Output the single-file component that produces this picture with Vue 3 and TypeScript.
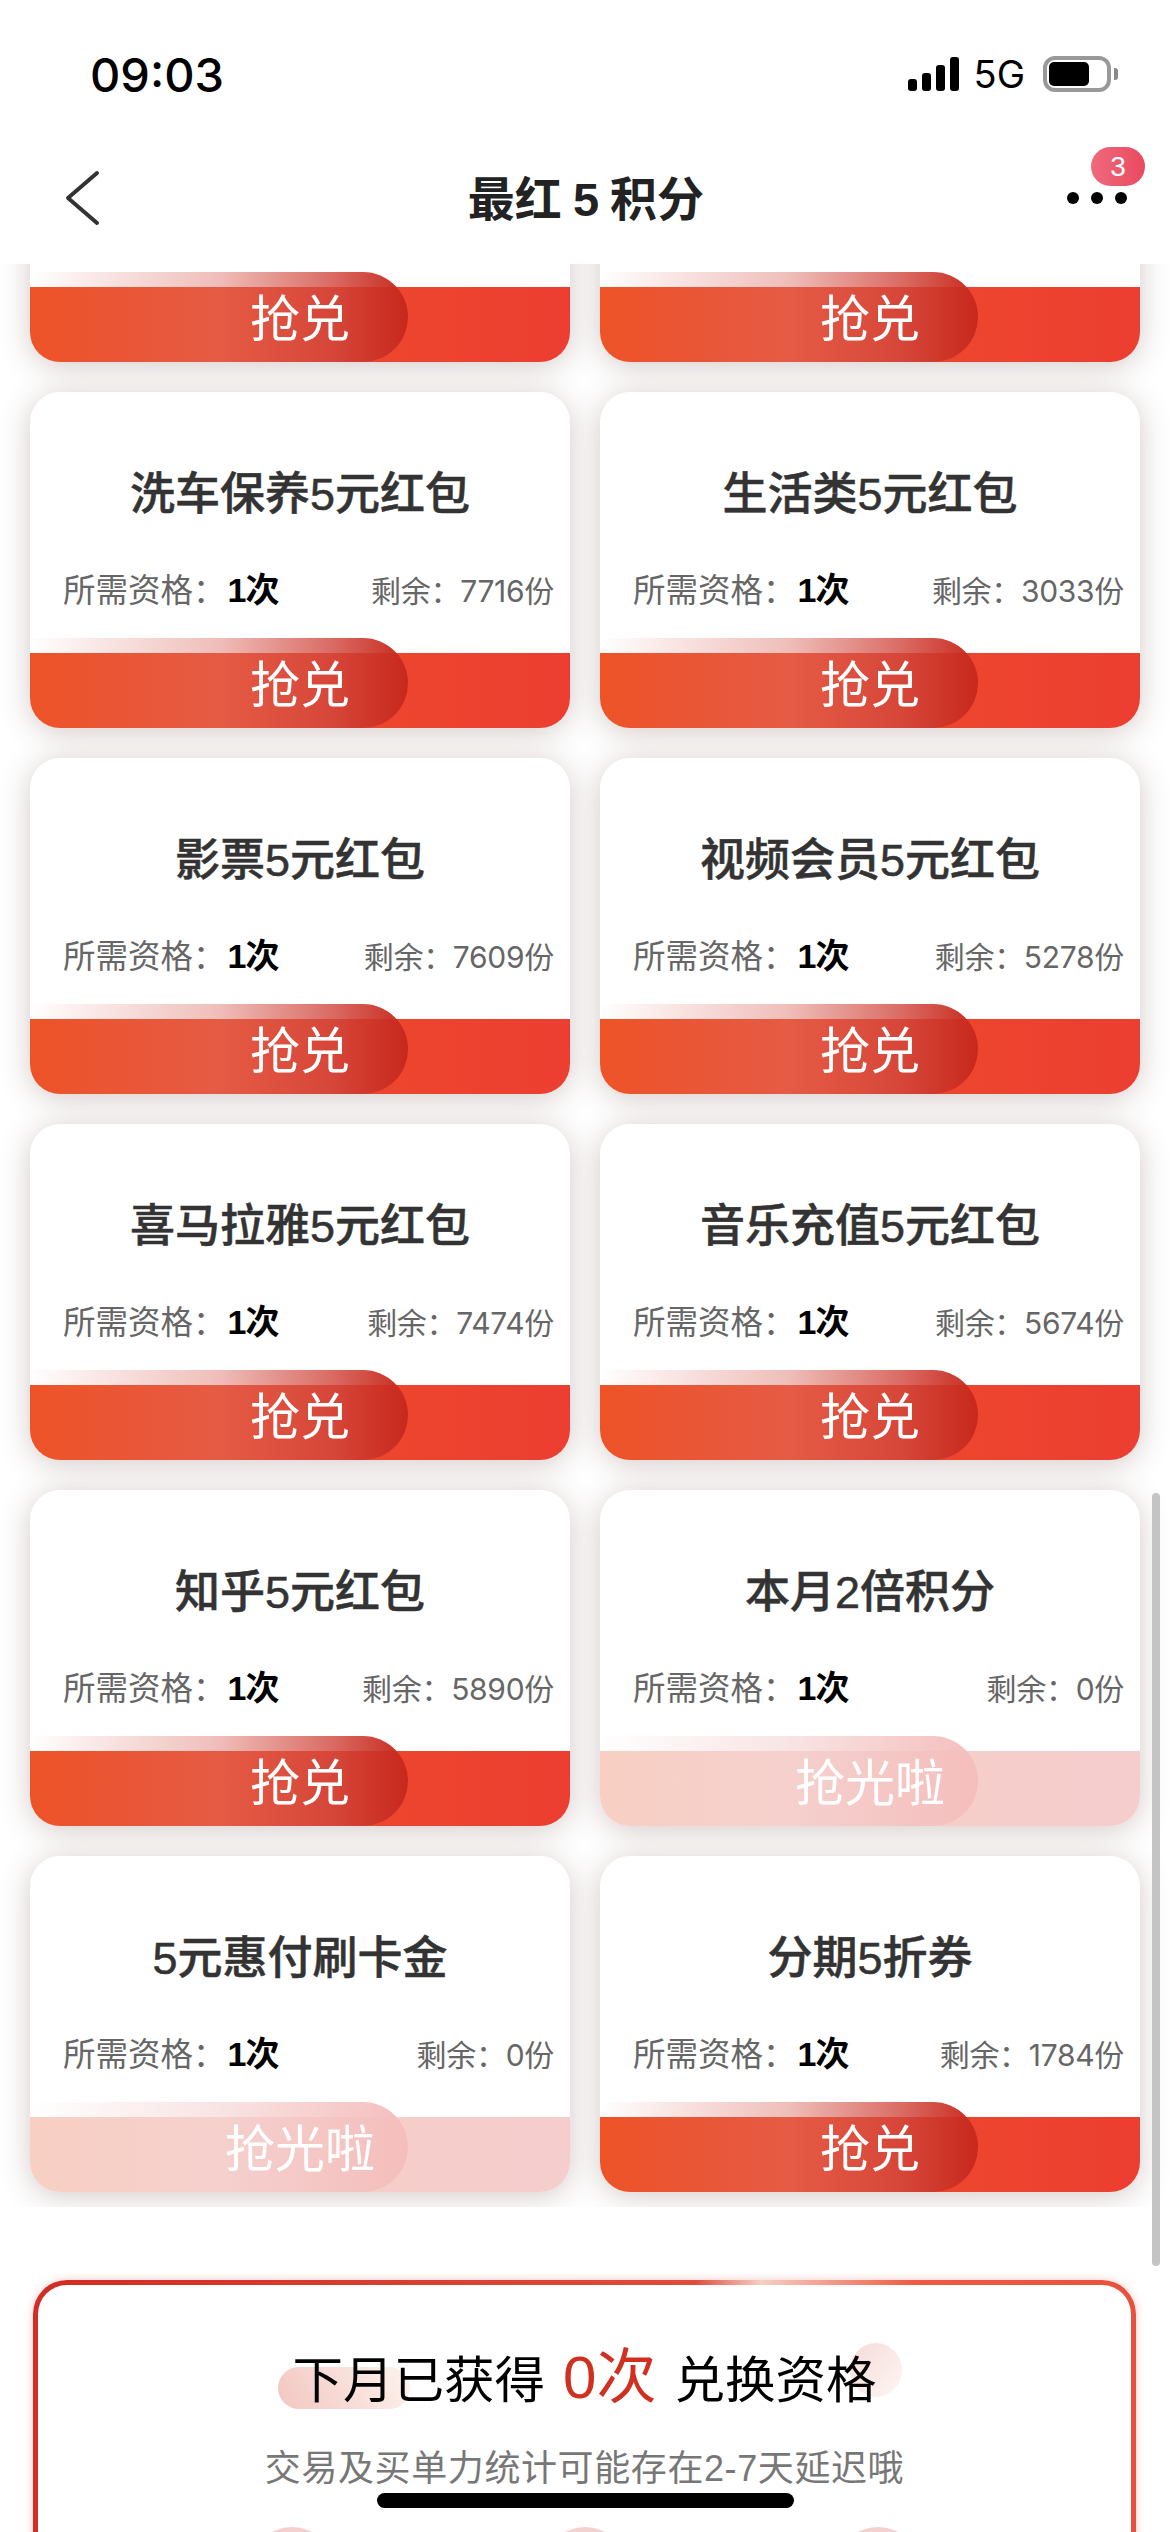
<template>
  <div class="phone">
    <header class="top">
      <div class="status">
        <span class="time">09:03</span>
        <div class="status-right">
          <div class="signal">
            <i v-for="h in signalBars" :key="h" :style="{ height: h + 'px' }"></i>
          </div>
          <span class="net">5G</span>
          <div class="battery"><b></b></div>
        </div>
      </div>
      <nav class="nav">
        <svg class="back" viewBox="0 0 36 56" fill="none" stroke="#333" stroke-width="4" stroke-linecap="round" stroke-linejoin="round">
          <path d="M32 3 L3 28 L32 53" />
        </svg>
        <h1 class="nav-title">最红 5 积分</h1>
        <div class="more">
          <span class="dots"><i></i><i></i><i></i></span>
          <span class="badge">3</span>
        </div>
      </nav>
    </header>

    <div class="list-clip">
      <div class="grid">
        <div v-for="(item, i) in items" :key="i" class="card">
          <template v-if="item.name">
            <h3 class="card-title">{{ item.name }}</h3>
            <div class="meta">
              <span class="need">所需资格：<strong>1次</strong></span>
              <span class="left">剩余：{{ item.left }}份</span>
            </div>
          </template>
          <div class="foot" :class="{ off: item.left === 0 }">
            <div class="pill">{{ item.left === 0 ? '抢光啦' : '抢兑' }}</div>
          </div>
        </div>
      </div>
    </div>

    <section class="next">
      <div class="next-inner">
        <span class="blob blob-a"></span>
        <span class="blob blob-b"></span>
        <p class="next-title">下月已获得<em>0次</em>兑换资格</p>
        <p class="next-sub">交易及买单力统计可能存在2-7天延迟哦</p>
        <div class="next-icons"><i></i><i></i><i></i></div>
      </div>
    </section>

    <div class="scrollbar"></div>
    <div class="home"></div>
  </div>
</template>

<script setup lang="ts">
interface Item {
  name: string
  left: number
}

const signalBars = [12, 18, 26, 34]

// 第一行被顶栏盖住，只露出按钮
const items: Item[] = [
  { name: '', left: 1 },
  { name: '', left: 1 },
  { name: '洗车保养5元红包', left: 7716 },
  { name: '生活类5元红包', left: 3033 },
  { name: '影票5元红包', left: 7609 },
  { name: '视频会员5元红包', left: 5278 },
  { name: '喜马拉雅5元红包', left: 7474 },
  { name: '音乐充值5元红包', left: 5674 },
  { name: '知乎5元红包', left: 5890 },
  { name: '本月2倍积分', left: 0 },
  { name: '5元惠付刷卡金', left: 0 },
  { name: '分期5折券', left: 1784 }
]
</script>

<style scoped>
.phone {
  position: relative;
  width: 1170px;
  height: 2532px;
  overflow: hidden;
  background: #fff;
  font-family: "Liberation Sans", "Noto Sans CJK SC", sans-serif;
}

.top {
  position: relative;
  z-index: 2;
  height: 264px;
  background: #fff;
}

.status {
  height: 148px;
  padding: 0 59px 0 90px;
  display: flex;
  align-items: center;
  justify-content: space-between;
  box-sizing: border-box;
}

.time {
  font-family: Inter, sans-serif;
  font-size: 47px;
  font-weight: 500;
  color: #000;
}

.status-right {
  display: flex;
  align-items: center;
}

.signal {
  display: flex;
  align-items: flex-end;
  gap: 5px;
  height: 34px;
}

.signal i {
  display: block;
  width: 9px;
  background: #000;
  border-radius: 3px;
}

.net {
  margin-left: 15px;
  font-family: Inter, sans-serif;
  font-size: 38px;
  color: #000;
}

.battery {
  position: relative;
  margin-left: 18px;
  width: 68px;
  height: 36px;
  box-sizing: border-box;
  border: 4px solid #999;
  border-radius: 12px;
  padding: 2px;
}

.battery b {
  display: block;
  width: 40px;
  height: 24px;
  background: #000;
  border-radius: 5px;
}

.battery::after {
  content: "";
  position: absolute;
  right: -11px;
  top: 8px;
  width: 4px;
  height: 12px;
  background: #8a8a8a;
  border-radius: 0 3px 3px 0;
}

.nav {
  height: 100px;
  padding: 0 43px 0 65px;
  display: grid;
  grid-template-columns: 1fr auto 1fr;
  align-items: center;
}

.back {
  width: 36px;
  height: 56px;
}

.nav-title {
  margin: 0 20px 6px 0;
  font-size: 47px;
  font-weight: 700;
  word-spacing: -2px;
  color: #222;
}

.more {
  position: relative;
  justify-self: end;
}

.dots {
  display: flex;
  gap: 12px;
}

.dots i {
  display: block;
  width: 12px;
  height: 12px;
  border-radius: 50%;
  background: #000;
}

.badge {
  position: absolute;
  left: 24px;
  top: -45px;
  width: 54px;
  height: 39px;
  border-radius: 20px;
  background: linear-gradient(90deg, #ee6a7c, #ea4a60);
  color: #fff;
  font-size: 28px;
  line-height: 39px;
  text-align: center;
}

.list-clip {
  height: 1943px;
  overflow: hidden;
}

.grid {
  margin-top: -238px;
  padding: 0 30px;
  display: grid;
  grid-template-columns: 540px 540px;
  gap: 30px;
}

.card {
  height: 336px;
  display: flex;
  flex-direction: column;
  background: #fff;
  border-radius: 30px;
  overflow: hidden;
  box-shadow: 0 4px 30px rgba(100, 66, 55, 0.28);
}

.card-title {
  margin: 73px 0 0;
  font-size: 45px;
  line-height: 60px;
  font-weight: 500;
  -webkit-text-stroke: 0.5px #333;
  color: #333;
  text-align: center;
}

.meta {
  margin-top: 43px;
  padding: 0 16px 0 33px;
  display: flex;
  justify-content: space-between;
  align-items: baseline;
  line-height: 44px;
}

.need {
  font-size: 32.5px;
  color: #666;
}

.need strong {
  margin-left: 2px;
  font-size: 34px;
  letter-spacing: -1px;
  color: #000;
}

.left {
  font-family: Inter, "Noto Sans CJK SC", sans-serif;
  font-size: 30px;
  letter-spacing: -0.3px;
  color: #666;
}

.foot {
  margin-top: auto;
  height: 90px;
  background: linear-gradient(90deg, #ee5327, #ec3e31) left bottom / 100% 75px no-repeat;
}

.foot.off {
  background: linear-gradient(90deg, #f8cfc2, #f5cdcd) left bottom / 100% 75px no-repeat;
}

.pill {
  width: 378px;
  height: 90px;
  padding: 6px 0 0 162px;
  box-sizing: border-box;
  border-radius: 0 45px 45px 0;
  background: linear-gradient(90deg, rgba(238, 100, 80, 0), rgba(220, 110, 100, 0.45) 50%, rgba(208, 70, 60, 0.8) 80%, rgb(200, 40, 28));
  display: flex;
  justify-content: center;
  white-space: nowrap;
  color: #fff;
  font-size: 50px;
  line-height: 84px;
}

.foot.off .pill {
  background: linear-gradient(90deg, rgba(248, 200, 190, 0), rgba(244, 210, 210, 0.6) 50%, rgb(244, 190, 188));
}

.next {
  margin: 73px 0 0 33px;
  width: 1103px;
  padding: 5px;
  box-sizing: border-box;
  border-radius: 34px;
  background: linear-gradient(90deg, #d12c25, #e04b3e 60%, #f5cfc4 66%, #ef5a42 80%, #e8523c);
  box-shadow: 0 0 8px rgba(208, 48, 40, 0.25);
}

.next-inner {
  position: relative;
  padding-top: 53px;
  height: 400px;
  border-radius: 29px;
  background: #fff;
  text-align: center;
}

.blob {
  position: absolute;
}

.blob-a {
  left: 240px;
  top: 82px;
  width: 132px;
  height: 42px;
  border-radius: 21px;
  background: linear-gradient(60deg, #f3c6c1, #fdf3ee);
}

.blob-b {
  left: 812px;
  top: 58px;
  width: 52px;
  height: 54px;
  border-radius: 50%;
  background: linear-gradient(135deg, #f6dcd9, #fdf6f3);
}

.next-title {
  position: relative;
  margin: 0;
  font-size: 50.5px;
  line-height: 80px;
  color: #000;
}

.next-title em {
  margin: 0 18px;
  font-style: normal;
  font-size: 60px;
  color: #d0301f;
}

.next-sub {
  position: relative;
  margin: 28px 0 0;
  font-size: 36px;
  letter-spacing: 0.6px;
  line-height: 40px;
  color: #777;
}

.next-icons {
  margin-top: 38px;
  display: grid;
  grid-template-columns: repeat(3, 293px);
  justify-content: center;
  justify-items: center;
}

.next-icons i {
  display: block;
  width: 84px;
  height: 84px;
  border-radius: 50%;
  background: #f5d0d0;
}

.scrollbar {
  position: absolute;
  left: 1152px;
  top: 1493px;
  width: 8px;
  height: 773px;
  border-radius: 4px;
  background: #c4c4c4;
}

.home {
  position: absolute;
  left: 377px;
  top: 2493px;
  width: 417px;
  height: 15px;
  border-radius: 8px;
  background: #000;
}
</style>
